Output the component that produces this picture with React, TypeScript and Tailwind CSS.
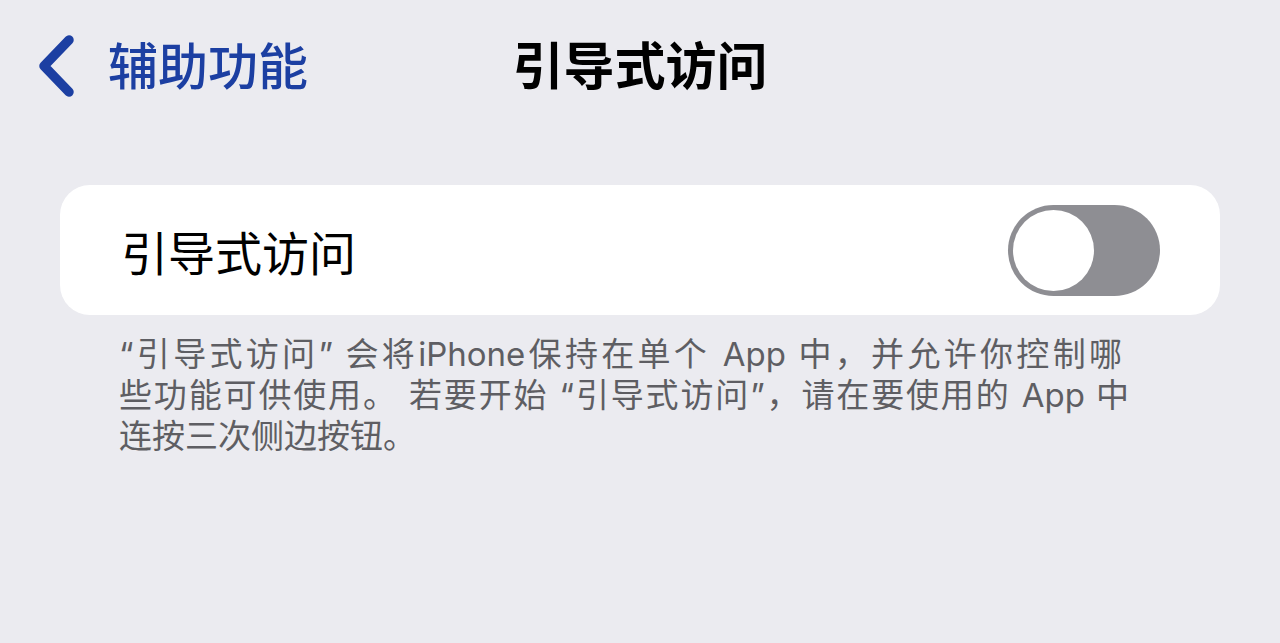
import React from "react";

const cjk = { fontFamily: '"Noto Sans CJK SC", "Noto Sans", sans-serif' };
const mixed = { fontFamily: 'Inter, "Noto Sans CJK SC", sans-serif' };

function BackChevron() {
  return (
    <svg width="40" height="62" viewBox="0 0 40 62" fill="none" className="shrink-0 mt-[6px]">
      <path
        d="M33 5 L8 31 L33 57"
        stroke="currentColor"
        strokeWidth="9.5"
        strokeLinecap="round"
        strokeLinejoin="round"
      />
    </svg>
  );
}

function Toggle() {
  return (
    <div className="w-[152px] h-[91px] rounded-full bg-[#8e8e93] p-[5px] flex items-center">
      <div className="w-[81px] h-[81px] rounded-full bg-white" />
    </div>
  );
}

export default function App() {
  return (
    <div className="w-full h-[643px] bg-[#ebebf0] overflow-hidden" style={cjk}>
      {/* navigation bar */}
      <div className="h-[126px] grid grid-cols-[1fr_auto_1fr] items-center">
        <div className="flex items-center pl-[36px] gap-[32px] text-[#1c3fa2]">
          <BackChevron />
          <span className="text-[50px] leading-none font-medium whitespace-nowrap">辅助功能</span>
        </div>
        <div className="text-[51px] leading-none font-bold text-black whitespace-nowrap">引导式访问</div>
        <div />
      </div>

      {/* setting card */}
      <div className="mx-[60px] mt-[59px] h-[130px] rounded-[30px] bg-white flex items-center justify-between pl-[61px] pr-[60px]">
        <span className="text-[47px] leading-none text-black whitespace-nowrap">引导式访问</span>
        <Toggle />
      </div>

      {/* footer description */}
      <div className="mt-[19px] pl-[119px] text-[33px] leading-[41px] text-[#5e5e63]" style={mixed}>
        <div className="w-[1003px] whitespace-nowrap text-justify [text-align-last:justify]">
          “引导式访问” 会将iPhone保持在单个 App 中，并允许你控制哪
        </div>
        <div className="w-[1010px] whitespace-nowrap text-justify [text-align-last:justify]">
          些功能可供使用。 若要开始 “引导式访问”，请在要使用的 App 中
        </div>
        <div className="whitespace-nowrap">连按三次侧边按钮。</div>
      </div>
    </div>
  );
}
